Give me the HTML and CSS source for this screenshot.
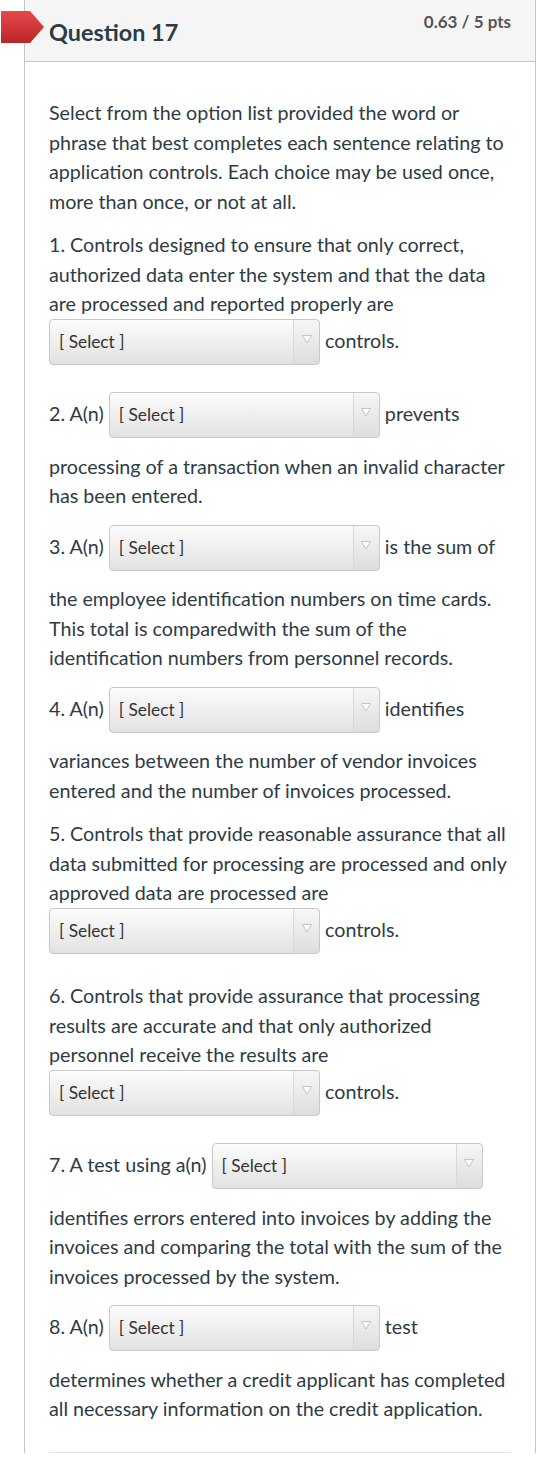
FILE: index.html
```html
<!DOCTYPE html>
<html lang="en">
<head>
    <meta charset="UTF-8">
    <meta name="viewport" content="width=device-width, initial-scale=1.0">
    <title>Question 17</title>
    <link rel="stylesheet" href="styles.css">
</head>
<body>
    <div class="question">
        <span class="flag"></span>
        <div class="question-header">
            <h2 class="question-name">Question 17</h2>
            <span class="question-points">0.63 / 5 pts</span>
        </div>

        <div class="question-body">
            <p>Select from the option list provided the word or phrase that best completes each sentence relating to application controls. Each choice may be used once, more than once, or not at all.</p>

            <p>1. Controls designed to ensure that only correct, authorized data enter the system and that the data are processed and reported properly are
                <span class="select"><span class="select-label">[ Select ]</span><span class="select-arrow"><svg width="10" height="9" viewBox="0 0 10 9"><polygon points="0.5,0.5 9.5,0.5 5,8" fill="#fff" stroke="#c4c4c4" stroke-width="1"/></svg></span></span> controls.</p>

            <p>2. A(n) <span class="select"><span class="select-label">[ Select ]</span><span class="select-arrow"><svg width="10" height="9" viewBox="0 0 10 9"><polygon points="0.5,0.5 9.5,0.5 5,8" fill="#fff" stroke="#c4c4c4" stroke-width="1"/></svg></span></span> prevents processing of a transaction when an invalid character has been entered.</p>

            <p>3. A(n) <span class="select"><span class="select-label">[ Select ]</span><span class="select-arrow"><svg width="10" height="9" viewBox="0 0 10 9"><polygon points="0.5,0.5 9.5,0.5 5,8" fill="#fff" stroke="#c4c4c4" stroke-width="1"/></svg></span></span> is the sum of the employee identification numbers on time cards. This total is comparedwith the sum of the identification numbers from personnel records.</p>

            <p>4. A(n) <span class="select"><span class="select-label">[ Select ]</span><span class="select-arrow"><svg width="10" height="9" viewBox="0 0 10 9"><polygon points="0.5,0.5 9.5,0.5 5,8" fill="#fff" stroke="#c4c4c4" stroke-width="1"/></svg></span></span> identifies variances between the number of vendor invoices entered and the number of invoices processed.</p>

            <p>5. Controls that provide reasonable assurance that all data submitted for processing are processed and only approved data are processed are
                <span class="select"><span class="select-label">[ Select ]</span><span class="select-arrow"><svg width="10" height="9" viewBox="0 0 10 9"><polygon points="0.5,0.5 9.5,0.5 5,8" fill="#fff" stroke="#c4c4c4" stroke-width="1"/></svg></span></span> controls.</p>

            <p>6. Controls that provide assurance that processing results are accurate and that only authorized personnel receive the results are
                <span class="select"><span class="select-label">[ Select ]</span><span class="select-arrow"><svg width="10" height="9" viewBox="0 0 10 9"><polygon points="0.5,0.5 9.5,0.5 5,8" fill="#fff" stroke="#c4c4c4" stroke-width="1"/></svg></span></span> controls.</p>

            <p>7. A test using a(n) <span class="select"><span class="select-label">[ Select ]</span><span class="select-arrow"><svg width="10" height="9" viewBox="0 0 10 9"><polygon points="0.5,0.5 9.5,0.5 5,8" fill="#fff" stroke="#c4c4c4" stroke-width="1"/></svg></span></span> identifies errors entered into invoices by adding the invoices and comparing the total with the sum of the invoices processed by the system.</p>

            <p>8. A(n) <span class="select"><span class="select-label">[ Select ]</span><span class="select-arrow"><svg width="10" height="9" viewBox="0 0 10 9"><polygon points="0.5,0.5 9.5,0.5 5,8" fill="#fff" stroke="#c4c4c4" stroke-width="1"/></svg></span></span> test determines whether a credit applicant has completed all necessary information on the credit application.</p>

            <hr class="question-rule">
        </div>
    </div>
</body>
</html>
```

FILE: styles.css
```css
body {
    margin: 0;
    background-color: #fff;
    font-family: Lato, "Liberation Sans", sans-serif;
    color: #2d3b45;
}

.question {
    position: relative;
    margin-left: 24px;
    width: 512px;
    box-sizing: border-box;
    border-left: 1px solid #c4c4c4;
    border-right: 1px solid #c4c4c4;
}

/* red marker that sticks out past the left edge */
.flag {
    position: absolute;
    left: -24px;
    top: 11px;
    width: 43px;
    height: 32px;
    background: linear-gradient(#e7484b, #b9262a);
    clip-path: polygon(0 0, 29px 0, 43px 50%, 29px 100%, 0 100%);
}

.question-header {
    display: flex;
    justify-content: space-between;
    align-items: flex-start;
    height: 61px;
    padding: 0 24px;
    background-color: #f5f5f5;
    border-bottom: 1px solid #c4c4c4;
}

.question-name {
    margin: 0;
    padding-top: 18px;
    font-size: 23.4px;
    font-weight: bold;
    line-height: 28px;
}

.question-points {
    padding-top: 11px;
    font-size: 17px;
    font-weight: bold;
    line-height: 22px;
    color: #555;
}

.question-body {
    padding: 36px 24px 0;
    font-size: 19.7px;
    line-height: 29.5px;
}

.question-body p {
    margin: 0 0 14px;
}

.select {
    display: inline-flex;
    width: 271px;
    height: 46px;
    box-sizing: border-box;
    margin-bottom: 13.5px;
    border: 1px solid #c8c8c8;
    border-radius: 4px;
    background: linear-gradient(#fcfcfc, #e2e2e2);
    font-size: 17.3px;
    color: #333;
}

.select-label {
    flex: 1;
    padding: 11px 0 0 9px;
    line-height: 22px;
}

.select-arrow {
    width: 25px;
    display: flex;
    align-items: center;
    justify-content: center;
    border-left: 1px solid #d8d8d8;
    background-color: rgba(0, 0, 0, 0.02);
}

.select-arrow svg {
    margin-top: -5px;
}

.question-rule {
    margin: 28px 0 0;
    border: 0;
    border-top: 1px solid #e2e2e2;
}
```
